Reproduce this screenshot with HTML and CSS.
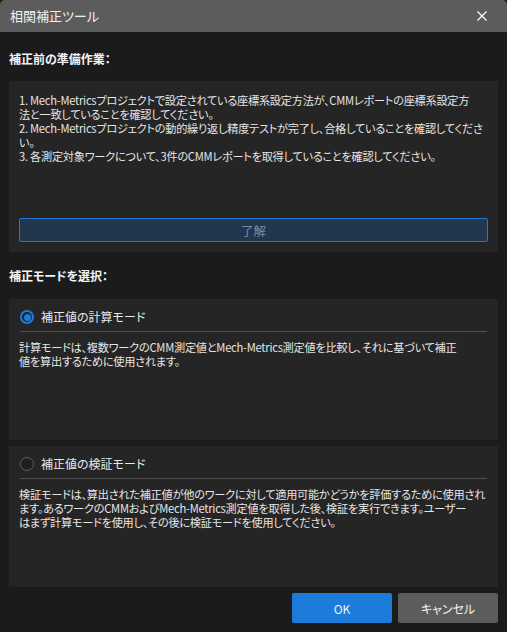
FILE: index.html
```html
<!DOCTYPE html>
<html lang="ja">
<head>
<meta charset="utf-8">
<title>相関補正ツール</title>
<link rel="stylesheet" href="styles.css">
</head>
<body>
<div class="dialog">
  <header class="titlebar">
    <span class="title">相関補正ツール</span>
    <span class="close" aria-label="閉じる">
      <svg width="10" height="10" viewBox="0 0 10 10"><path d="M0.5 0.5 L9.5 9.5 M9.5 0.5 L0.5 9.5" stroke="#ffffff" stroke-width="1.2" fill="none"/></svg>
    </span>
  </header>
  <main class="content">
    <h2 class="heading heading-first">補正前の準備作業：</h2>
    <section class="panel prep">
      <p class="prep-text">1. Mech-Metricsプロジェクトで設定されている座標系設定方法が、CMMレポートの座標系設定方
法と一致していることを確認してください。
2. Mech-Metricsプロジェクトの動的繰り返し精度テストが完了し、合格していることを確認してくださ
い。
3. 各測定対象ワークについて、3件のCMMレポートを取得していることを確認してください。</p>
      <button class="ack" type="button">了解</button>
    </section>
    <h2 class="heading heading-second">補正モードを選択：</h2>
    <section class="panel mode">
      <div class="mode-row">
        <span class="radio checked"></span>
        <span class="mode-label">補正値の計算モード</span>
      </div>
      <div class="divider"></div>
      <p class="mode-desc">計算モードは、複数ワークのCMM測定値とMech-Metrics測定値を比較し、それに基づいて補正
値を算出するために使用されます。</p>
    </section>
    <section class="panel mode mode-last">
      <div class="mode-row">
        <span class="radio"></span>
        <span class="mode-label">補正値の検証モード</span>
      </div>
      <div class="divider"></div>
      <p class="mode-desc">検証モードは、算出された補正値が他のワークに対して適用可能かどうかを評価するために使用され
ます。あるワークのCMMおよびMech-Metrics測定値を取得した後、検証を実行できます。ユーザー
はまず計算モードを使用し、その後に検証モードを使用してください。</p>
    </section>
    <div class="actions">
      <button class="btn btn-ok" type="button">OK</button>
      <button class="btn btn-cancel" type="button">キャンセル</button>
    </div>
  </main>
</div>
</body>
</html>
```

FILE: styles.css
```css
* { box-sizing: border-box; }
html, body {
  margin: 0;
  padding: 0;
  background: #1b1b1b;
}
body {
  font-family: "Noto Sans CJK JP", "Noto Sans", sans-serif;
  font-feature-settings: "palt";
  color: #e6e6e6;
  font-size: 12px;
  line-height: 14px;
}
.dialog {
  width: 507px;
  height: 632px;
  display: flex;
  flex-direction: column;
  background: #1b1b1b;
}
.titlebar {
  height: 32px;
  background: #5c5c5c;
  border-radius: 5px 5px 0 0;
  display: flex;
  align-items: center;
  justify-content: space-between;
  padding: 0 20px 0 10px;
}
.title {
  font-size: 13px;
  color: #f2f2f2;
  line-height: 16px;
}
.close {
  display: flex;
  width: 10px;
  height: 10px;
}
.content {
  padding: 0 9px;
  display: flex;
  flex-direction: column;
}
.heading {
  margin: 0;
  font-size: 12px;
  font-weight: bold;
  line-height: 14px;
  color: #f4f4f4;
}
.heading-first { margin-top: 20px; margin-bottom: 15px; }
.heading-second { margin-top: 17px; margin-bottom: 16px; }
.panel {
  background: #252525;
}
.prep {
  height: 171px;
  padding: 12px 10px 10px;
  display: flex;
  flex-direction: column;
}
.prep-text,
.mode-desc {
  margin: 0;
  font-size: 11.2px;
  line-height: 14px;
  letter-spacing: -0.26px;
  white-space: pre-line;
}
.ack {
  margin-top: auto;
  height: 24px;
  width: 100%;
  background: #22374d;
  border: 1px solid #1c78d6;
  border-radius: 2px;
  color: #7f8ea0;
  font-family: inherit;
  font-feature-settings: "palt";
  font-size: 12.5px;
  padding: 0;
}
.mode {
  height: 141px;
  padding: 8px 10px 0;
}
.mode-last {
  margin-top: 6px;
}
.mode-row {
  height: 20px;
  display: flex;
  align-items: center;
  gap: 7px;
  padding-left: 1px;
}
.radio {
  width: 14px;
  height: 14px;
  border-radius: 50%;
  border: 1.5px solid #5f5f5f;
  background: #1e1e1e;
  display: flex;
  align-items: center;
  justify-content: center;
}
.radio.checked {
  border: 2px solid #1b7cdc;
  background: #1e1e1e;
}
.radio.checked::after {
  content: "";
  width: 7px;
  height: 7px;
  border-radius: 50%;
  background: #1b7cdc;
}
.mode-label {
  font-size: 12px;
  color: #e8e8e8;
}
.divider {
  height: 1px;
  background: #505050;
  margin: 4px 1px 8px;
}
.actions {
  display: flex;
  justify-content: flex-end;
  gap: 6px;
  margin-top: 6px;
}
.btn {
  width: 100px;
  height: 30px;
  border: none;
  border-radius: 2px;
  color: #f2f2f2;
  font-family: inherit;
  font-feature-settings: "palt";
  font-size: 12px;
  padding: 0;
}
.btn-ok { background: #1b7cdc; }
.btn-cancel { background: #5c5c5c; }
```
